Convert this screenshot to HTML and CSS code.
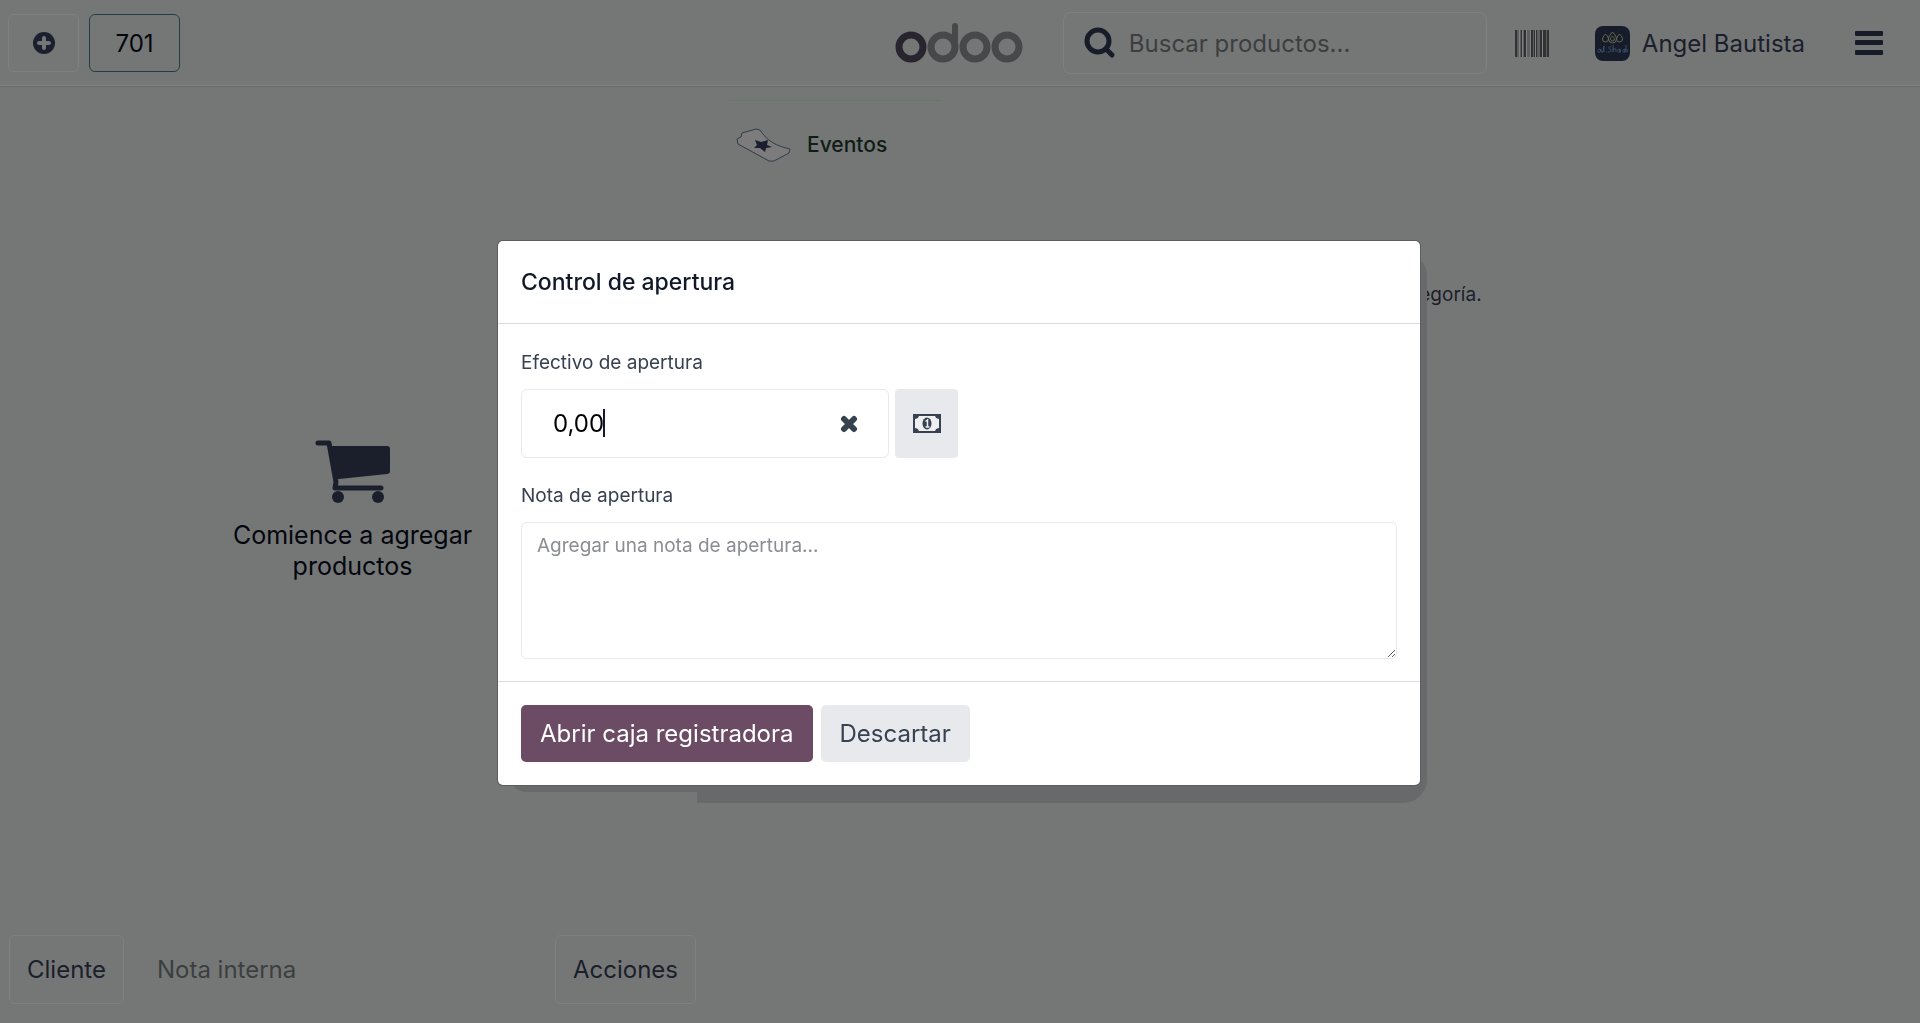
FILE: index.html
```html
<!DOCTYPE html>
<html lang="es">
<head>
    <meta charset="UTF-8">
    <meta name="viewport" content="width=device-width, initial-scale=1.0">
    <title>Odoo POS</title>
    <link rel="stylesheet" href="styles.css">
</head>
<body>
    <header class="navbar">
        <div class="orders">
            <button class="new-order" aria-label="Nueva orden">
                <svg width="22" height="22" viewBox="0 0 22 22">
                    <circle cx="11" cy="11" r="11" fill="#1c1f2d"/>
                    <path d="M11 6V16M6 11H16" stroke="#757776" stroke-width="4" stroke-linecap="round"/>
                </svg>
            </button>
            <button class="order-number">701</button>
        </div>
        <div class="nav-right">
            <!-- Odoo logo -->
            <svg class="logo" width="128" height="42" viewBox="0 0 128 42" fill="none" stroke="#474849" stroke-width="7">
                <circle cx="16" cy="25" r="12" stroke="#28252f"/>
                <circle cx="48" cy="25" r="12"/>
                <path d="M60 25V4" stroke-width="6" stroke-linecap="round"/>
                <circle cx="80" cy="25" r="12"/>
                <circle cx="112" cy="25" r="12"/>
            </svg>
            <label class="search">
                <svg width="32" height="32" viewBox="0 0 32 32" fill="none" stroke="#181c29">
                    <circle cx="14" cy="14" r="11" stroke-width="5"/>
                    <path d="M22 22L28 28" stroke-width="5" stroke-linecap="round"/>
                </svg>
                <input type="text" placeholder="Buscar productos..." aria-label="Buscar productos">
            </label>
            <button class="icon-button barcode" aria-label="Escanear">
                <svg width="34" height="27" viewBox="0 0 34 27">
                    <path d="M1 0h33v27h-33z" fill="#5c5e5f"/>
                    <path d="M0 0h2v27h-2zM6 0h1v27h-1zM9 0h2v27h-2zM16 0h2v27h-2zM19 0h1v27h-1zM21 0h1v27h-1zM25 0h2v27h-2zM28 0h3v27h-3zM32 0h2v27h-2z" fill="#303133"/>
                    <path d="M4 0h1v27h-1zM7 0h1v27h-1zM11 0h1v27h-1zM15 0h1v27h-1zM20 0h1v27h-1zM27 0h1v27h-1z" fill="#808281"/>
                </svg>
            </button>
            <button class="user">
                <svg width="35" height="35" viewBox="0 0 35 35" fill="none">
                    <rect width="35" height="35" rx="8" fill="#171c2b"/>
                    <g stroke="#66684f">
                        <path d="M17.500 6c3 3 4 5 4 7a4 4 0 0 1-8 0c0-2 1-4 4-7z"/>
                        <path d="M17.500 10c1 1 2 2 2 3a2 2 0 0 1-4 0c0-1 1-2 2-3z"/>
                        <path d="M10.500 8c2 2 3 4 3 5a3 3 0 0 1-6 0c0-1 1-3 3-5z"/>
                        <path d="M24.500 8c2 2 3 4 3 5a3 3 0 0 1-6 0c0-1 1-3 3-5z"/>
                    </g>
                    <path d="M5 23c-3 0-3 4 0 3l1-3v3h2l1-6v6M11 26h1M16 21c-3-1-3 2-1 2s1 4-2 3M18 19v7v-3h3v3M25 23c-3 0-3 4 0 3v-3v3h1M30 23c-3 0-3 4 0 3v-3v3M31 19v7c3 0 2-3 0-3" stroke="#3a4c66"/>
                </svg>
                <span>Angel Bautista</span>
            </button>
            <button class="icon-button menu" aria-label="Menú">
                <svg width="28" height="24" viewBox="0 0 28 24" fill="#171b28">
                    <rect width="28" height="5" rx="1"/>
                    <rect y="9" width="28" height="5" rx="1"/>
                    <rect y="19" width="28" height="5" rx="1"/>
                </svg>
            </button>
        </div>
    </header>

    <main class="content">
        <section class="order-pane">
            <div class="empty-order">
                <svg width="76" height="64" viewBox="0 0 76 64" fill="#1b1e2b">
                    <path d="M3 3H14L21 42L20 48H66" fill="none" stroke="#1b1e2b" stroke-width="5" stroke-linecap="round" stroke-linejoin="round"/>
                    <path d="M16 6H72Q75 6 75 9V31Q75 34 72 34L24 39H20z"/>
                    <circle cx="23" cy="57" r="6"/>
                    <circle cx="63" cy="57" r="6"/>
                </svg>
                <p>Comience a agregar productos</p>
            </div>
            <div class="order-actions">
                <button>Cliente</button>
                <button class="internal-note">Nota interna</button>
                <button class="actions">Acciones</button>
            </div>
        </section>
        <section class="products-pane">
            <button class="category">
                <svg width="56" height="36" viewBox="0 0 56 36">
                    <path d="M6 6L20 2L24 3C31 14 40 19 54 22L53 26L38 34L33 34L2 17L1 12L5 10z" fill="#7b7c7b" stroke="#323c49" stroke-linejoin="round"/>
                    <path d="M19 13l6 2 7-2-1 5 5 2-6 1-1 4-5-4-6 0 3-3z" fill="#1b1d30"/>
                </svg>
                <span>Eventos</span>
            </button>
            <p class="no-products">No hay productos en esta categoría.</p>
        </section>
    </main>

    <div class="overlay">
        <div class="modal" role="dialog" aria-labelledby="modal-title">
            <div class="modal-header">
                <h2 id="modal-title">Control de apertura</h2>
            </div>
            <div class="modal-body">
                <label for="opening-cash">Efectivo de apertura</label>
                <div class="cash-row">
                    <div class="cash-input">
                        <input type="text" id="opening-cash" value="0,00">
                        <button class="clear-button" aria-label="Borrar">
                            <svg width="18" height="18" viewBox="0 0 18 18">
                                <path d="M4 4L14 14M14 4L4 14" stroke="#36424e" stroke-width="6" stroke-linecap="round"/>
                            </svg>
                        </button>
                    </div>
                    <button class="money-button" aria-label="Monedas y billetes">
                        <svg width="28" height="20" viewBox="0 0 28 20">
                            <rect x="1" y="1" width="26" height="17" fill="#eeeff1" stroke="#374151" stroke-width="2"/>
                            <path d="M1 1h5q0 4-5 4zM27 1h-5q0 4 5 4zM1 18h5q0-4-5-4zM27 18h-5q0-4 5-4z" fill="#374151"/>
                            <ellipse cx="14" cy="9.500" rx="4.500" ry="6" fill="#374151"/>
                            <path d="M12.500 7.500L14.500 6V13M12.500 13H16.500" fill="none" stroke="#eeeff1" stroke-width="1.500"/>
                        </svg>
                    </button>
                </div>
                <label for="opening-note">Nota de apertura</label>
                <textarea id="opening-note" placeholder="Agregar una nota de apertura..."></textarea>
            </div>
            <div class="modal-footer">
                <button class="btn-primary">Abrir caja registradora</button>
                <button class="btn-secondary">Descartar</button>
            </div>
        </div>
    </div>
</body>
</html>
```
FILE: styles.css
```css
* {
    box-sizing: border-box;
}

body {
    display: flex;
    flex-direction: column;
    min-height: 100vh;
    margin: 0;
    font-family: Inter, "Liberation Sans", sans-serif;
    font-size: 24px;
    color: #1b1e2b;
    background-color: #757776;
}

button,
input,
textarea {
    font: inherit;
    color: inherit;
}

button {
    padding: 0;
    border: none;
    background: none;
    cursor: pointer;
}

svg {
    display: block;
    flex-shrink: 0;
}

/* Top bar */
.navbar {
    display: flex;
    justify-content: space-between;
    align-items: center;
    height: 87px;
    padding: 0 37px 0 8px;
    border-bottom: 1px solid #666867;
    box-shadow: inset 0 -1px #828483;
}

.orders {
    display: flex;
    gap: 10px;
}

.new-order,
.order-number {
    display: flex;
    align-items: center;
    justify-content: center;
    height: 58px;
    border: 1px solid #7f8180;
    border-radius: 6px;
}

.new-order {
    width: 71px;
}

.order-number {
    width: 91px;
    border-color: #203f43;
    color: #04060e;
}

.nav-right {
    display: flex;
    align-items: center;
}

.logo {
    margin-right: 40px;
}

.search {
    display: flex;
    align-items: center;
    gap: 13px;
    width: 424px;
    height: 62px;
    padding: 0 20px;
    border: 1px solid #7f8180;
    border-radius: 8px;
}

.search input {
    flex: 1;
    min-width: 0;
    padding: 0;
    border: none;
    outline: none;
    background: none;
}

.search input::placeholder {
    color: #3c3e40;
    opacity: 1;
}

.barcode {
    margin: 0 46px 0 28px;
}

.user {
    display: flex;
    align-items: center;
    gap: 12px;
}

.menu {
    margin-left: 50px;
}

/* Main area */
.content {
    display: flex;
    flex: 1;
}

.order-pane {
    display: flex;
    flex-direction: column;
    width: 705px;
    padding: 0 9px 19px;
}

.empty-order {
    display: flex;
    flex: 1;
    flex-direction: column;
    align-items: center;
    justify-content: center;
    gap: 16px;
    color: #04060e;
    font-size: 25px;
    line-height: 31px;
    text-align: center;
}

.empty-order p {
    width: 260px;
    margin: 0;
}

.order-actions {
    display: flex;
}

.order-actions button {
    height: 69px;
    padding: 0 17px;
    border: 1px solid #7f8180;
    border-radius: 6px;
}

.order-actions .internal-note {
    padding: 0 32px;
    border-color: transparent;
    color: #3c3e40;
}

.order-actions .actions {
    margin-left: auto;
}

.products-pane {
    flex: 1;
    padding: 13px 10px 0 22px;
}

.category {
    display: flex;
    align-items: center;
    gap: 15px;
    width: 214px;
    height: 88px;
    padding-left: 9px;
    border-top: 1px solid #5f7a60;
    color: #101d16;
    font-size: 21px;
    font-weight: 500;
}

.no-products {
    margin: 93px 0 0;
    font-size: 19px;
    line-height: 28px;
    text-align: center;
}

/* Opening control dialog */
.overlay {
    position: fixed;
    inset: 0;
    display: flex;
    align-items: center;
    justify-content: center;
    padding: 3px 2px 0 0;
}

.modal {
    position: relative;
    width: 90%;
    max-width: 922px;
    border-radius: 5px;
    background-color: #fff;
    box-shadow: 0 0 0 1px #5c5d5f;
}

/* Stepped shadow behind the dialog */
.modal::before,
.modal::after {
    content: "";
    position: absolute;
    z-index: -1;
    background-color: #68696b;
}

.modal::before {
    inset: 14px -7px -18px 199px;
    border-radius: 20px 20px 24px 0;
}

.modal::after {
    inset: 50% 50% -7px 12px;
    border-radius: 0 0 0 16px;
}

.modal-header {
    padding: 24px 23px;
    border-bottom: 1px solid #d8dadd;
}

.modal-header h2 {
    margin: 0;
    color: #111827;
    font-size: 23px;
    font-weight: 500;
    line-height: 34px;
}

.modal-body {
    padding: 25px 23px 22px;
    color: #374151;
    font-size: 19px;
}

.modal-body label {
    display: block;
    margin-bottom: 12px;
    line-height: 28px;
}

.cash-row {
    display: flex;
    gap: 6px;
    margin-bottom: 24px;
}

.cash-input {
    position: relative;
    display: flex;
    align-items: center;
    width: 368px;
    height: 69px;
    padding: 0 30px 0 31px;
    border: 1px solid #e7e9ed;
    border-radius: 6px;
}

/* Text cursor after the amount */
.cash-input::after {
    content: "";
    position: absolute;
    top: 19px;
    left: 81px;
    width: 2px;
    height: 28px;
    background-color: #111827;
}

.cash-input input {
    flex: 1;
    min-width: 0;
    padding: 0;
    border: none;
    outline: none;
    background: none;
    color: #000;
    font-size: 24px;
}

.money-button {
    display: flex;
    align-items: center;
    justify-content: center;
    width: 63px;
    border-radius: 4px;
    background-color: #e7e9ed;
}

.modal-body textarea {
    display: block;
    width: 100%;
    height: 137px;
    padding: 9px 15px;
    border: 1px solid #e7e9ed;
    border-radius: 5px;
    outline: none;
    line-height: 28px;
    resize: vertical;
}

.modal-body textarea::placeholder {
    color: #8b8d92;
    opacity: 1;
}

.modal-footer {
    display: flex;
    gap: 8px;
    padding: 23px;
    border-top: 1px solid #d8dadd;
}

.modal-footer button {
    height: 57px;
    padding: 0 19px;
    border-radius: 5px;
}

.btn-primary {
    background-color: #6b4c64;
    color: #fff;
}

.btn-secondary {
    background-color: #e7e9ed;
    color: #374151;
}
```
